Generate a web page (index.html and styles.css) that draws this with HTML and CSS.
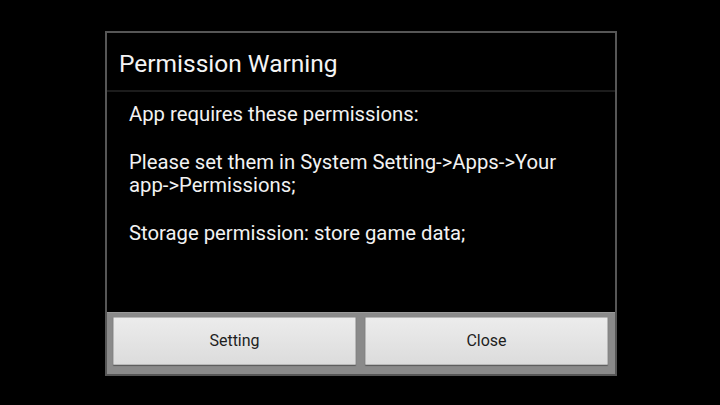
FILE: index.html
```html
<!DOCTYPE html>
<html lang="en">
<head>
  <meta charset="UTF-8">
  <meta name="viewport" content="width=device-width, initial-scale=1.0">
  <title>Permission Warning</title>
  <link rel="stylesheet" href="styles.css">
</head>
<body>
  <div class="screen">
    <div class="dialog">
      <div class="dialog-title">Permission Warning</div>
      <div class="dialog-body">
        <p>App requires these permissions:</p>
        <p>Please set them in System Setting-&gt;Apps-&gt;Your <span class="nowrap">app-&gt;Permissions;</span></p>
        <p>Storage permission: store game data;</p>
      </div>
      <div class="dialog-buttons">
        <button class="btn">Setting</button>
        <button class="btn">Close</button>
      </div>
    </div>
  </div>
</body>
</html>
```

FILE: styles.css
```css
html, body {
  margin: 0;
  height: 100%;
  background: #000;
}
body {
  font-family: Roboto, "Noto Sans", sans-serif;
  color: #f2f2f2;
}
.screen {
  padding: 31px 0 0 105px;
}
.dialog {
  width: 508px;
  height: 341px;
  border: 2px solid #565656;
  background: #000;
  display: flex;
  flex-direction: column;
}
.dialog-title {
  height: 59px;
  box-sizing: border-box;
  padding: 4px 0 0 12px;
  display: flex;
  align-items: center;
  font-size: 24.5px;
  color: #f4f4f4;
  border-bottom: 2px solid #1c1c1c;
}
.dialog-body {
  flex: 1;
  padding: 11px 30px 0 22px;
  font-size: 20.3px;
  line-height: 23.7px;
}
.dialog-body p {
  margin: 0 0 24px;
}
.nowrap {
  white-space: nowrap;
}
.dialog-buttons {
  height: 62px;
  box-sizing: border-box;
  background: #8a8a8a;
  border-top: 1px solid #9a9a9a;
  padding: 4px 7px 9px 6px;
  display: flex;
  gap: 9px;
}
.btn {
  flex: 1;
  border: 1px solid #b8b8b8;
  border-radius: 1px;
  background: linear-gradient(#ececec, #dcdcdc);
  box-shadow: 0 1px 1px rgba(0, 0, 0, 0.35);
  font-family: Roboto, "Noto Sans", sans-serif;
  font-size: 16px;
  color: #1e1e1e;
  padding: 0 0 1px;
}
```
